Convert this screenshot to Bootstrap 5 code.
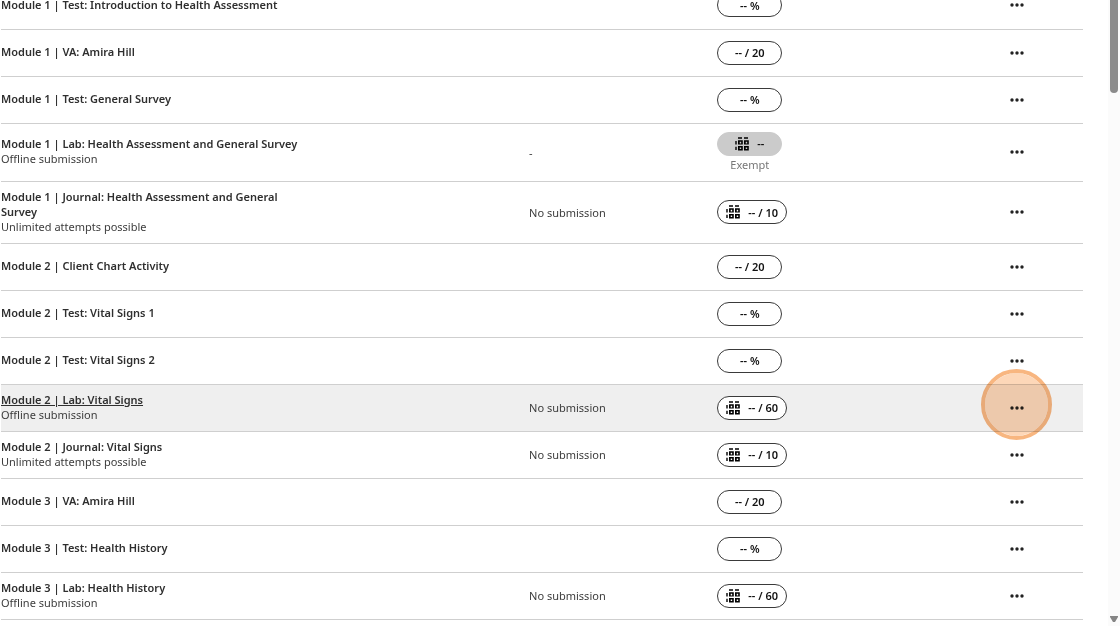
<!DOCTYPE html>
<html lang="en">
<head>
<meta charset="utf-8">
<meta name="viewport" content="width=device-width, initial-scale=1">
<title>Gradebook</title>
<link href="https://cdn.jsdelivr.net/npm/bootstrap@5.3.0/dist/css/bootstrap.min.css" rel="stylesheet">
<style>
body { font-family: "Noto Sans", "Open Sans", sans-serif; font-size: 11px; line-height: 15px; color: #3c3c3c; background: #fff; }
.grades { flex: 1 1 0; min-width: 0; padding: 0 25px 0 1px; overflow: hidden; }
.grades table { table-layout: fixed; width: 100%; margin: -18px 0 0; color: inherit; }
.grades td { padding: 0; border-bottom: 1px solid #cfcfcf; height: 47px; vertical-align: middle; }
.col-item { width: 48.8%; }
.col-status { width: 17.4%; }
.col-menu { width: 133px; }
.item { max-width: 308px; padding: 7px 0 9px; }
.item a { color: #2f2f2f; font-weight: 600; text-decoration: none; display: block; }
.active-row td { background: #efefef; }
.active-row .item a { text-decoration: underline; }
.grade { width: fit-content; }
.pill { min-width: 65px; height: 24px; padding: 0 8px; border: 1px solid #3a3a3a; border-radius: 12px; background: #fff; color: #111; font-weight: 600; }
.pill.exempt { background: #cbcbcb; border-color: #cbcbcb; }
.exempt-note { color: #777; line-height: 17px; }
.more { width: 24px; height: 24px; color: #222; }
.click-ring { position: absolute; left: 50%; top: 50%; width: 71px; height: 71px; margin: -39px 0 0 -36px; border: 4px solid #f8b680; border-radius: 50%; background: #fdd7b8; background-clip: padding-box; mix-blend-mode: multiply; pointer-events: none; z-index: 1; }
.scroll-track { width: 12px; background: #fbfbfb; }
.scroll-thumb { width: 8px; height: 93px; background: #8b8b8b; border-radius: 0 0 4px 4px; }
</style>
</head>
<body>
<svg class="d-none" aria-hidden="true">
  <symbol id="rubric" viewBox="0 0 14 14">
    <path fill="#000" fill-rule="evenodd" d="M3 0.300h4v1.500H3zM9 0.300h4v1.500H9zM0.300 4h1.400v3.500H0.300zM3 3.200h4.800v4.400H3zM4.700 4.800v1.600h1.500V4.800zM9 3.200h4.800v4.400H9zM10.700 4.800v1.600h1.500V4.800zM0.300 9.800h1.400v3.200H0.300zM3 9.100h4.800v4.400H3zM4.700 10.600v1.500h1.500v-1.500zM9 9.100h4.800v4.400H9zM10.700 10.600v1.500h1.500v-1.500z"/>
  </symbol>
  <symbol id="dots" viewBox="0 0 14 4">
    <g fill="currentColor"><circle cx="2" cy="2" r="1.700"/><circle cx="7" cy="2" r="1.700"/><circle cx="12" cy="2" r="1.700"/></g>
  </symbol>
</svg>
<div class="d-flex vh-100 overflow-hidden">
  <main class="grades">
    <table>
      <colgroup><col class="col-item"><col class="col-status"><col><col class="col-menu"></colgroup>
      <tbody id="rows"></tbody>
    </table>
  </main>
  <div class="scroll-track d-flex flex-column align-items-center justify-content-between" aria-hidden="true">
    <div class="scroll-thumb"></div>
    <svg class="mb-1" width="8" height="6" viewBox="0 0 8 6"><path fill="#858585" d="M0 0h8v1L5 6H3L0 1z"/></svg>
  </div>
</div>
<script src="https://cdn.jsdelivr.net/npm/bootstrap@5.3.0/dist/js/bootstrap.bundle.min.js"></script>
<script>
const rows = [
  { name: 'Module 1 | Test: Introduction to Health Assessment', grade: '-- %' },
  { name: 'Module 1 | VA: Amira Hill', grade: '-- / 20' },
  { name: 'Module 1 | Test: General Survey', grade: '-- %' },
  { name: 'Module 1 | Lab: Health Assessment and General Survey', note: 'Offline submission', status: '-', grade: '--', rubric: true, exempt: true },
  { name: 'Module 1 | Journal: Health Assessment and General Survey', note: 'Unlimited attempts possible', status: 'No submission', grade: '-- / 10', rubric: true },
  { name: 'Module 2 | Client Chart Activity', grade: '-- / 20' },
  { name: 'Module 2 | Test: Vital Signs 1', grade: '-- %' },
  { name: 'Module 2 | Test: Vital Signs 2', grade: '-- %' },
  { name: 'Module 2 | Lab: Vital Signs', note: 'Offline submission', status: 'No submission', grade: '-- / 60', rubric: true, active: true },
  { name: 'Module 2 | Journal: Vital Signs', note: 'Unlimited attempts possible', status: 'No submission', grade: '-- / 10', rubric: true },
  { name: 'Module 3 | VA: Amira Hill', grade: '-- / 20' },
  { name: 'Module 3 | Test: Health History', grade: '-- %' },
  { name: 'Module 3 | Lab: Health History', note: 'Offline submission', status: 'No submission', grade: '-- / 60', rubric: true }
];
document.getElementById('rows').innerHTML = rows.map(r => `
  <tr class="${r.active ? 'active-row' : ''}">
    <td><div class="item"><a href="#">${r.name}</a>${r.note ? `<div>${r.note}</div>` : ''}</div></td>
    <td>${r.status || ''}</td>
    <td><div class="grade d-flex flex-column align-items-center ${r.exempt ? 'py-2' : ''}">
      <div class="pill d-flex align-items-center justify-content-center gap-2 ${r.exempt ? 'exempt' : ''}">${r.rubric ? '<svg width="14" height="14" aria-hidden="true"><use href="#rubric"/></svg>' : ''}<span class="text-nowrap">${r.grade}</span></div>
      ${r.exempt ? '<div class="exempt-note">Exempt</div>' : ''}
    </div></td>
    <td><div class="d-flex justify-content-center"><div class="position-relative">
      <button type="button" class="more btn p-0 border-0 d-flex align-items-center justify-content-center" aria-label="More options"><svg width="14" height="4" aria-hidden="true"><use href="#dots"/></svg></button>
      ${r.active ? '<span class="click-ring"></span>' : ''}
    </div></div></td>
  </tr>`).join('');
</script>
</body>
</html>
